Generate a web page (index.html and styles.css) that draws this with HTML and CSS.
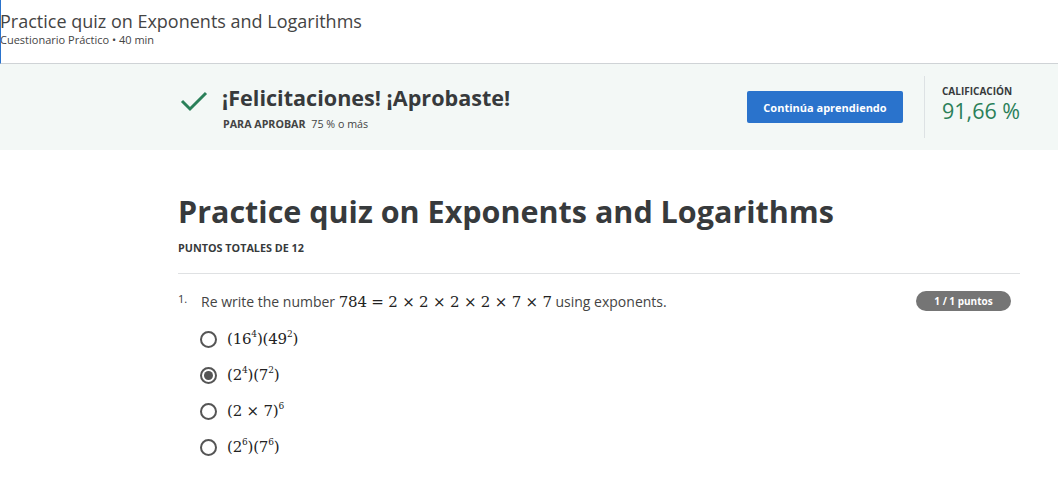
FILE: index.html
```html
<!DOCTYPE html>
<html lang="es">
<head>
<meta charset="utf-8">
<link rel="stylesheet" href="styles.css">
</head>
<body>
<header class="top">
  <div class="top-title">Practice quiz on Exponents and Logarithms</div>
  <div class="top-sub">Cuestionario Práctico • 40 min</div>
</header>
<section class="banner">
  <div class="banner-main">
    <svg class="check" width="28" height="22" viewBox="0 0 28 22"><path d="M2 11 L10 19 L26 3" fill="none" stroke="#2a8059" stroke-width="3"/></svg>
    <div class="banner-text">
      <div class="congrats">¡Felicitaciones! ¡Aprobaste!</div>
      <div class="pass"><b>PARA APROBAR</b> 75 % o más</div>
    </div>
  </div>
  <button class="btn">Continúa aprendiendo</button>
  <div class="divider"></div>
  <div class="score">
    <div class="score-label">CALIFICACIÓN</div>
    <div class="score-value">91,66 %</div>
  </div>
</section>
<main class="content">
  <h1 class="title">Practice quiz on Exponents and Logarithms</h1>
  <div class="total">PUNTOS TOTALES DE 12</div>
  <hr class="rule">
  <div class="question">
    <div class="qnum">1.</div>
    <div class="qtext">Re write the number <span class="m">784 = 2 × 2 × 2 × 2 × 7 × 7</span> using exponents.</div>
    <div class="badge">1 / 1 puntos</div>
  </div>
  <ul class="options">
    <li><span class="radio"></span><span class="m">(16<sup>4</sup>)(49<sup>2</sup>)</span></li>
    <li><span class="radio on"></span><span class="m">(2<sup>4</sup>)(7<sup>2</sup>)</span></li>
    <li><span class="radio"></span><span class="m">(2 × 7)<sup>6</sup></span></li>
    <li><span class="radio"></span><span class="m">(2<sup>6</sup>)(7<sup>6</sup>)</span></li>
  </ul>
</main>
</body>
</html>
```
FILE: styles.css
```css
* { box-sizing: border-box; }
body {
  margin: 0;
  font-family: "Open Sans", "Noto Sans", sans-serif;
  color: #373a3c;
  background: #fff;
}
.top {
  height: 64px;
  border-left: 1px solid #2a73cc;
  border-bottom: 1px solid #cfd3d6;
  padding-top: 9px;
  overflow: hidden;
}
.top-title {
  font-size: 18px;
  line-height: 24px;
  color: #444;
  margin-left: -1px;
}
.top-sub {
  font-size: 11px;
  line-height: 14px;
  color: #444;
  margin-left: -1px;
}
.banner {
  height: 86px;
  background: #f3f8f6;
  display: flex;
  align-items: center;
  padding-left: 180px;
}
.banner-main {
  display: flex;
  align-items: flex-start;
  width: 567px;
  padding-top: 0;
}
.check { margin-top: 6px; margin-right: 14px; }
.congrats {
  font-size: 21.6px;
  font-weight: 700;
  line-height: 28px;
  color: #373a3c;
}
.pass {
  font-size: 10.7px;
  line-height: 14px;
  margin-top: 5px;
  margin-left: 1px;
  color: #444;
}
.pass b { margin-right: 3px; }
.btn {
  width: 156px;
  height: 32px;
  background: #2a73cc;
  color: #fff;
  border: none;
  border-radius: 2px;
  font-family: inherit;
  font-size: 11px;
  font-weight: 700;
  padding: 0;
}
.divider {
  width: 1px;
  height: 62px;
  background: #dde2e4;
  margin-left: 21px;
  margin-right: 17px;
}
.score { margin-top: -6px; }
.score-label {
  font-size: 10px;
  font-weight: 700;
  line-height: 14px;
  color: #373a3c;
}
.score-value {
  font-size: 21.5px;
  line-height: 26px;
  color: #2a8059;
}
.content {
  padding: 0 38px 0 178px;
}
.title {
  margin: 41px 0 0;
  font-size: 30.5px;
  line-height: 40px;
  font-weight: 700;
  color: #373a3c;
}
.total {
  font-size: 10.8px;
  font-weight: 700;
  line-height: 14px;
  margin-top: 10px;
}
.rule {
  border: none;
  border-top: 1px solid #dfe1e3;
  margin: 18px 0 0;
}
.question {
  display: flex;
  align-items: center;
  margin-top: 17px;
  height: 20px;
}
.qnum {
  font-size: 11px;
  width: 23px;
  align-self: flex-start;
  margin-top: 0;
}
.qtext {
  font-size: 14px;
  flex: 1;
  color: #444;
}
.m {
  font-family: "DejaVu Serif", "Liberation Serif", serif;
  font-size: 15px;
  color: #222;
  letter-spacing: -0.2px;
}
sup { font-size: 9px; vertical-align: 0; position: relative; top: -7px; }
.badge {
  width: 95px;
  height: 20px;
  border-radius: 10px;
  background: #757575;
  color: #fff;
  font-size: 10px;
  font-weight: 700;
  text-align: center;
  line-height: 20px;
  margin-right: 9px;
}
.options {
  list-style: none;
  margin: 10px 0 0;
  padding: 0 0 0 22px;
}
.options li {
  display: flex;
  align-items: center;
  height: 36px;
}
.radio {
  width: 17px;
  height: 17px;
  border: 2px solid #555;
  border-radius: 50%;
  margin-right: 10px;
  display: flex;
  align-items: center;
  justify-content: center;
}
.radio.on::after {
  content: "";
  width: 9px;
  height: 9px;
  border-radius: 50%;
  background: #555;
}
```
